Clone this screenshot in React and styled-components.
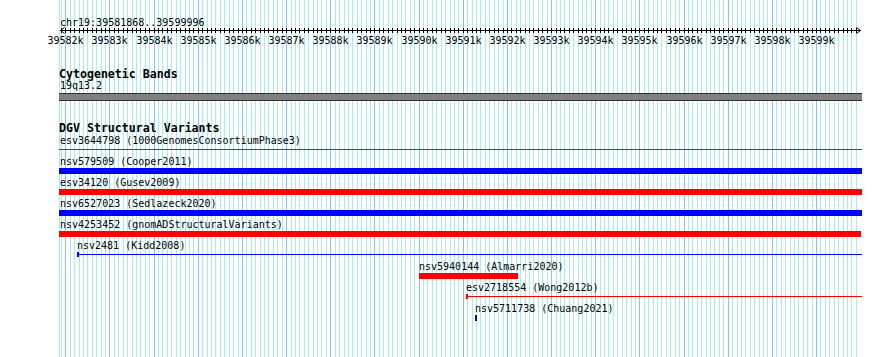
import React from 'react';
import styled, { createGlobalStyle } from 'styled-components';

const START = 39581868;
const END = 39599996;
const PX_LEFT = 60;
const SCALE = 0.04416; // px per bp
const CLIP_L = 59;
const CLIP_R = 862;

const bpToX = bp => PX_LEFT + (bp - START) * SCALE;

const variants = [
	{ id: 'esv3644798', src: '1000GenomesConsortiumPhase3', start: 39500000, end: 39700000, color: '#ff0000', kind: 'line' },
	{ id: 'nsv579509', src: 'Cooper2011', start: 39500000, end: 39700000, color: '#0000ff', kind: 'bar' },
	{ id: 'esv34120', src: 'Gusev2009', start: 39500000, end: 39700000, color: '#ff0000', kind: 'bar' },
	{ id: 'nsv6527023', src: 'Sedlazeck2020', start: 39500000, end: 39700000, color: '#0000ff', kind: 'bar' },
	{ id: 'nsv4253452', src: 'gnomADStructuralVariants', start: 39500000, end: 39600007, color: '#ff0000', kind: 'bar' },
	{ id: 'nsv2481', src: 'Kidd2008', start: 39582253, end: 39700000, color: '#0000ff', kind: 'line' },
	{ id: 'nsv5940144', src: 'Almarri2020', start: 39589998, end: 39592239, color: '#ff0000', kind: 'bar' },
	{ id: 'esv2718554', src: 'Wong2012b', start: 39591062, end: 39700000, color: '#ff0000', kind: 'line' },
	{ id: 'nsv5711738', src: 'Chuang2021', start: 39591266, end: 39591311, color: '#0000ff', kind: 'bar' },
];

const GlobalStyle = createGlobalStyle`
	html, body {
		margin: 0;
		padding: 0;
		background: #ffffff;
	}
	body {
		font-family: "DejaVu Sans Mono", "Liberation Mono", monospace;
		color: #000;
	}
`;

const Page = styled.div`
	position: relative;
	width: 890px;
	height: 357px;
	overflow: hidden;
	background: #ffffff;
`;

const GridLayer = styled.svg`
	position: absolute;
	left: 0;
	top: 0;
	z-index: 0;
`;

const Panel = styled.div`
	position: relative;
	z-index: 1;
	display: flex;
	flex-direction: column;
`;

const RulerSvg = styled.svg`
	display: block;
	font-family: "DejaVu Sans Mono", monospace;
	font-size: 10px;
`;

const Track = styled.section`
	display: flex;
	flex-direction: column;
	margin-top: ${p => p.$gap}px;
`;

const TrackTitle = styled.h2`
	margin: 0;
	padding-left: 59px;
	font-size: 11.6px;
	font-weight: bold;
	line-height: 13px;
	height: 13px;
	white-space: nowrap;
`;

const SubLabel = styled.div`
	padding-left: 60px;
	font-size: 10px;
	line-height: 10px;
	height: 10px;
	white-space: nowrap;
`;

const BandBar = styled.div`
	margin: 2px 0 0 59px;
	width: 803px;
	height: 6px;
	background: #808080;
	border-top: 1px solid #303030;
	border-bottom: 1px solid #303030;
`;

const RowList = styled.div`
	display: flex;
	flex-direction: column;
	margin-top: 1px;
`;

const Row = styled.div`
	display: flex;
	flex-direction: column;
	height: 21px;
`;

const RowLabel = styled.div`
	font-size: 10px;
	line-height: 10px;
	height: 10px;
	white-space: nowrap;
`;

const Lane = styled.div`
	display: flex;
	height: 11px;
`;

const Bar = styled.div`
	margin-top: 1px;
	height: 6px;
	background: ${p => p.$color};
`;

const LineGlyph = styled.div`
	position: relative;
	height: 7px;
`;

const Stroke = styled.div`
	margin-top: 3px;
	height: 1px;
	background: ${p => p.$color};
`;

const StartTick = styled.div`
	position: absolute;
	left: 0;
	top: 1px;
	width: 2px;
	height: 5px;
	background: ${p => p.$color};
`;

const MINOR = '#a6ecf0';
const MAJOR = '#84c6f0';

function gridLines() {
	const lines = [{ x: 59, major: false }];
	for (let bp = 39581900; bp <= END; bp += 100) {
		lines.push({ x: Math.floor(bpToX(bp)), major: bp % 1000 === 0 });
	}
	return lines;
}

const Grid = () => (
	<GridLayer width="890" height="357" shapeRendering="crispEdges">
		{gridLines().map((l, i) => (
			<rect key={i} x={l.x} y="0" width="1" height="357" fill={l.major ? MAJOR : MINOR} />
		))}
	</GridLayer>
);

const Ruler = () => {
	const ticks = [];
	for (let bp = 39581900; bp <= END; bp += 100) {
		ticks.push(bp);
	}
	const majors = ticks.filter(bp => bp % 1000 === 0);
	return (
		<RulerSvg width="890" height="50">
			<text x="60" y="26">chr19:39581868..39599996</text>
			<g shapeRendering="crispEdges">
				<rect x="60" y="30" width="801" height="1" fill="#000" />
				{ticks.map(bp => (
					<rect key={bp} x={Math.floor(bpToX(bp))} y="28" width="1" height="5" fill="#000" />
				))}
			</g>
			<polyline points="64.5,27.5 60.5,30.5 64.5,33.5" fill="none" stroke="#000" strokeWidth="1" />
			<polyline points="856.5,27.5 860.5,30.5 856.5,33.5" fill="none" stroke="#000" strokeWidth="1" />
			{majors.map(bp => (
				<text key={bp} x={Math.floor(bpToX(bp)) + 0.5} y="43.5" textAnchor="middle">
					{bp / 1000}k
				</text>
			))}
		</RulerSvg>
	);
};

const VariantRow = ({ item }) => {
	const left = Math.max(CLIP_L, Math.round(bpToX(item.start)));
	const right = Math.min(CLIP_R, Math.round(bpToX(item.end)));
	const labelLeft = Math.max(PX_LEFT, left);
	return (
		<Row>
			<RowLabel style={{ paddingLeft: labelLeft }}>
				{item.id} ({item.src})
			</RowLabel>
			<Lane>
				{item.kind === 'bar' ? (
					<Bar $color={item.color} style={{ marginLeft: left, width: right - left }} />
				) : (
					<LineGlyph style={{ marginLeft: left, width: right - left }}>
						<Stroke $color={item.color} />
						{item.start >= START && <StartTick $color={item.color} />}
					</LineGlyph>
				)}
			</Lane>
		</Row>
	);
};

const App = () => {
	return (
		<Page>
			<GlobalStyle />
			<Grid />
			<Panel>
				<Ruler />
				<Track $gap={18}>
					<TrackTitle>Cytogenetic Bands</TrackTitle>
					<SubLabel>19q13.2</SubLabel>
					<BandBar />
				</Track>
				<Track $gap={21}>
					<TrackTitle>DGV Structural Variants</TrackTitle>
					<RowList>
						{variants.map(v => (
							<VariantRow key={v.id} item={v} />
						))}
					</RowList>
				</Track>
			</Panel>
		</Page>
	);
};

export default App;
